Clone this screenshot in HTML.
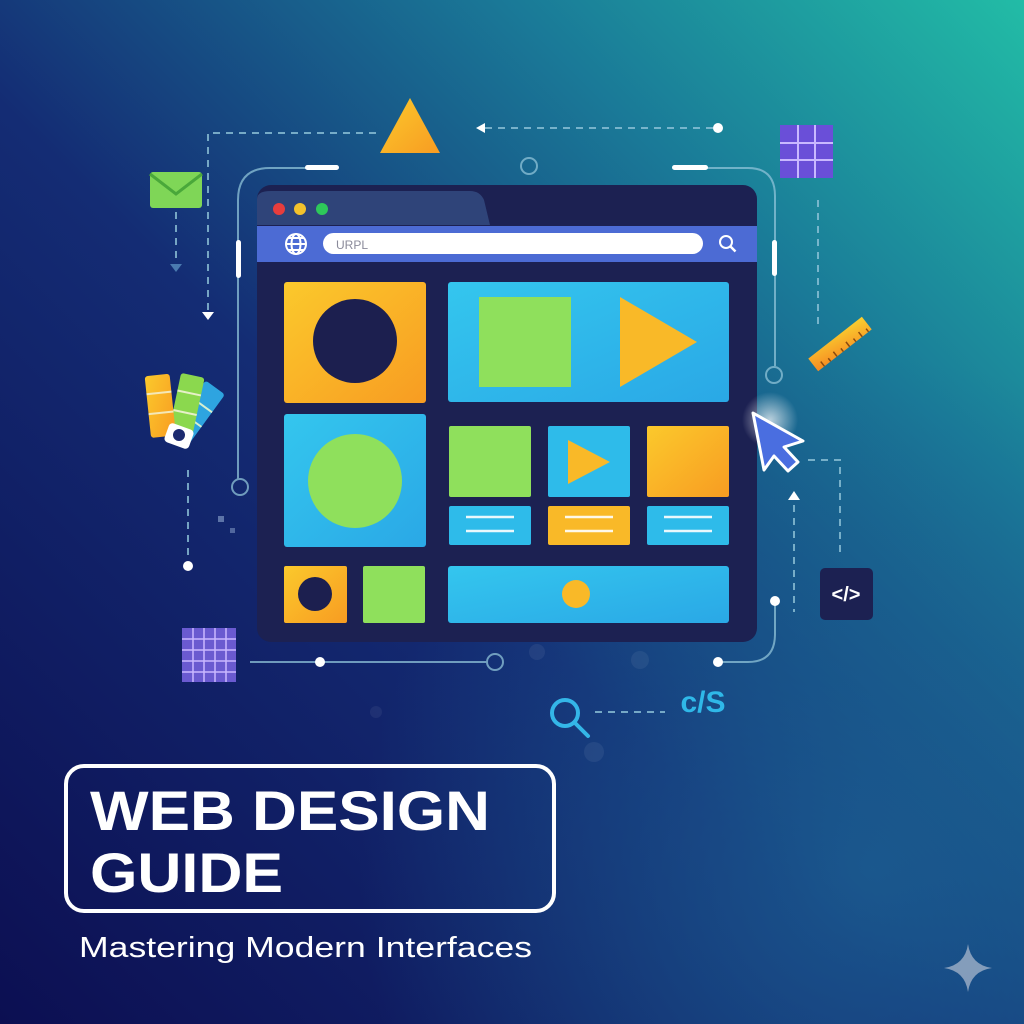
<!DOCTYPE html>
<html><head><meta charset="utf-8"><style>
html,body{margin:0;padding:0;width:1024px;height:1024px;overflow:hidden}
body{background:#12206a}
svg{display:block}
text{font-family:"Liberation Sans",sans-serif}
</style></head><body>
<svg width="1024" height="1024" viewBox="0 0 1024 1024" xmlns="http://www.w3.org/2000/svg">
<defs>
<linearGradient id="bg" x1="0" y1="1" x2="1" y2="0">
<stop offset="0" stop-color="#0c0f52"/>
<stop offset="0.45" stop-color="#142c74"/>
<stop offset="0.75" stop-color="#1a7a98"/>
<stop offset="1" stop-color="#22bca6"/>
</linearGradient>
<radialGradient id="br" cx="0.85" cy="0.85" r="0.5">
<stop offset="0" stop-color="#1b5f92" stop-opacity="0.8"/>
<stop offset="1" stop-color="#1b5f92" stop-opacity="0"/>
</radialGradient>
<linearGradient id="org" x1="0" y1="0" x2="1" y2="1"><stop offset="0" stop-color="#fbc92c"/><stop offset="1" stop-color="#f89c22"/></linearGradient>
<linearGradient id="blu" x1="0" y1="0" x2="1" y2="1"><stop offset="0" stop-color="#34c6ee"/><stop offset="1" stop-color="#2aa8e6"/></linearGradient>
<linearGradient id="rul" x1="0" y1="1" x2="1" y2="0"><stop offset="0" stop-color="#f78a22"/><stop offset="1" stop-color="#f9d030"/></linearGradient>
<radialGradient id="glow"><stop offset="0" stop-color="#ffffff" stop-opacity="0.7"/><stop offset="1" stop-color="#ffffff" stop-opacity="0"/></radialGradient>
</defs>
<rect width="1024" height="1024" fill="url(#bg)"/>
<rect width="1024" height="1024" fill="url(#br)"/>

<g stroke="#8fc3d8" stroke-width="2" fill="none" opacity="0.75">
<path d="M238 480 V200 Q238 168 270 168 H330"/>
<path d="M680 168 H748 Q775 168 775 196 V366"/>
<path d="M250 662 H488"/><path d="M720 662 H748 Q775 662 775 634 V600"/>
<circle cx="529" cy="166" r="8"/><circle cx="774" cy="375" r="8"/><circle cx="240" cy="487" r="8"/><circle cx="495" cy="662" r="8"/>
</g>
<g stroke="#8fc3d8" stroke-width="2" fill="none" stroke-dasharray="7 6" opacity="0.8">
<path d="M208 310 V133 H380"/><path d="M485 128 H715"/>
<path d="M176 212 V262"/><path d="M188 470 V560"/>
<path d="M818 200 V330"/><path d="M808 460 H840 V552"/><path d="M794 505 V612"/>
<path d="M595 712 H665"/>
</g>
<g fill="#ffffff">
<rect x="305" y="165" width="34" height="5" rx="2.5"/><rect x="672" y="165" width="36" height="5" rx="2.5"/>
<rect x="236" y="240" width="5" height="38" rx="2.5"/><rect x="772" y="240" width="5" height="36" rx="2.5"/>
<circle cx="718" cy="128" r="5"/><circle cx="188" cy="566" r="5"/><circle cx="320" cy="662" r="5"/><circle cx="718" cy="662" r="5"/><circle cx="775" cy="601" r="5"/>
<path d="M476 128 l9 -5 v10z"/><path d="M202 312 h12 l-6 8z"/><path d="M788 500 l6 -9 l6 9z"/>
</g>
<path d="M170 264 h12 l-6 8z" fill="#4a7ab0"/>
<rect x="218" y="516" width="6" height="6" fill="#8fa8d0" opacity="0.6"/><rect x="230" y="528" width="5" height="5" fill="#8fa8d0" opacity="0.5"/>

<path d="M410 98 L440 153 L380 153Z" fill="url(#org)"/>
<rect x="150" y="172" width="52" height="36" rx="3" fill="#7fd657"/>
<path d="M150 174 L176 194 L202 174" fill="none" stroke="#4aa83a" stroke-width="3"/>
<g>
<rect x="780" y="125" width="53" height="53" fill="#6a4fd8"/>
<path d="M798 125V178M815 125V178M780 143H833M780 160H833" stroke="#c9b8ff" stroke-width="2"/>
<rect x="182" y="628" width="54" height="54" fill="#6a5ad0"/>
<path d="M193 628V682M204 628V682M215 628V682M226 628V682M182 639H236M182 650H236M182 661H236M182 672H236" stroke="#c9b8ff" stroke-width="1.5"/>
</g>
<g transform="translate(840 344) rotate(-38)">
<rect x="-34" y="-8" width="68" height="16" fill="url(#rul)"/>
<path d="M-26 8v-6M-18 8v-4M-10 8v-6M-2 8v-4M6 8v-6M14 8v-4M22 8v-6M30 8v-4" stroke="#8a4a10" stroke-width="1.5"/>
</g>
<!-- swatches -->
<g>
<g transform="rotate(36 180 436)"><rect x="168" y="376" width="24" height="62" rx="3" fill="#2ea4e0"/><path d="M168 398h24M168 416h24" stroke="#d8efd0" stroke-width="2"/></g>
<g transform="rotate(12 180 436)"><rect x="168" y="374" width="24" height="62" rx="3" fill="#8bd84e"/><path d="M168 392h24M168 412h24" stroke="#e6f0c8" stroke-width="2"/></g>
<g transform="rotate(-6 170 436)"><rect x="151" y="374" width="25" height="62" rx="3" fill="url(#org)"/><path d="M151 392h25M151 412h25" stroke="#f4e8b8" stroke-width="2"/></g>
<rect x="166" y="426" width="26" height="20" rx="4" fill="#ffffff" transform="rotate(20 179 436)"/>
<circle cx="179" cy="435" r="6" fill="#1c2a70"/>
</g>

<rect x="257" y="185" width="500" height="457" rx="14" fill="#1c2152"/>
<path d="M257 225 V199 Q257 191 271 191 H470 Q480 191 484 200 L490 225Z" fill="#2f4479"/>
<circle cx="279" cy="209" r="6" fill="#e83d3d"/><circle cx="300" cy="209" r="6" fill="#f4c22c"/><circle cx="322" cy="209" r="6" fill="#2ec85a"/>
<rect x="257" y="226" width="500" height="36" fill="#4c6bd4"/>
<rect x="323" y="233" width="380" height="21" rx="10.5" fill="#ffffff"/>
<text x="336" y="249" font-size="12" fill="#8a8a9a">URPL</text>
<g stroke="#ffffff" stroke-width="2" fill="none"><circle cx="296" cy="244" r="10"/><ellipse cx="296" cy="244" rx="4.5" ry="10"/><path d="M286 244h20M288 238h16M288 250h16"/>
<circle cx="726" cy="242" r="6"/><path d="M730.5 246.5l5 5" stroke-width="2.5"/></g>

<rect x="284" y="282" width="142" height="121" rx="3" fill="url(#org)"/>
<circle cx="355" cy="341" r="42" fill="#1c1f4f"/>
<rect x="448" y="282" width="281" height="120" rx="3" fill="url(#blu)"/>
<rect x="479" y="297" width="92" height="90" fill="#8fe05c"/>
<path d="M620 297 L697 342 L620 387Z" fill="#f9b928"/>
<rect x="284" y="414" width="142" height="133" rx="3" fill="url(#blu)"/>
<circle cx="355" cy="481" r="47" fill="#8fe05c"/>
<rect x="449" y="426" width="82" height="71" rx="2" fill="#8fe05c"/>
<rect x="548" y="426" width="82" height="71" rx="2" fill="#2ebbea"/>
<path d="M568 440 L610 462 L568 484Z" fill="#f9b928"/>
<rect x="647" y="426" width="82" height="71" rx="2" fill="url(#org)"/>
<rect x="449" y="506" width="82" height="39" rx="2" fill="#2ebbea"/>
<rect x="548" y="506" width="82" height="39" rx="2" fill="#f9b928"/>
<rect x="647" y="506" width="82" height="39" rx="2" fill="#2ebbea"/>
<g stroke="#ffffff" stroke-width="2.5" opacity="0.9"><path d="M466 517h48M466 531h48M565 517h48M565 531h48M664 517h48M664 531h48"/></g>
<rect x="284" y="566" width="63" height="57" rx="2" fill="url(#org)"/>
<circle cx="315" cy="594" r="17" fill="#1c1f4f"/>
<rect x="363" y="566" width="62" height="57" rx="2" fill="#8fe05c"/>
<rect x="448" y="566" width="281" height="57" rx="3" fill="url(#blu)"/>
<circle cx="576" cy="594" r="14" fill="#f9b928"/>

<circle cx="770" cy="420" r="28" fill="url(#glow)"/>
<path d="M753 413 L803 441 L784 447 L798 462 L788 471 L774 456 L764 470Z" fill="#4a6ee0" stroke="#ffffff" stroke-width="3" stroke-linejoin="round"/>
<rect x="820" y="568" width="53" height="52" rx="5" fill="#1c2152"/>
<text x="846" y="601" font-size="20" font-weight="bold" fill="#ffffff" text-anchor="middle">&lt;/&gt;</text>
<g stroke="#34b6e8" stroke-width="4" fill="none"><circle cx="565" cy="713" r="13"/><path d="M575 723l13 13" stroke-linecap="round"/></g>
<text x="703" y="712" font-size="30" font-weight="bold" fill="#2fb8e8" text-anchor="middle">c/S</text>

<g fill="#ffffff" opacity="0.06"><circle cx="640" cy="660" r="9"/><circle cx="537" cy="652" r="8"/><circle cx="594" cy="752" r="10"/><circle cx="376" cy="712" r="6"/></g>

<rect x="66" y="766" width="488" height="145" rx="18" fill="none" stroke="#ffffff" stroke-width="4"/>
<text x="90" y="830" font-size="56" font-weight="bold" fill="#ffffff" textLength="400" lengthAdjust="spacingAndGlyphs">WEB DESIGN</text>
<text x="90" y="892" font-size="56" font-weight="bold" fill="#ffffff" textLength="193" lengthAdjust="spacingAndGlyphs">GUIDE</text>
<text x="79" y="957" font-size="29" fill="#ffffff" textLength="453" lengthAdjust="spacingAndGlyphs">Mastering Modern Interfaces</text>
<path d="M968 944 Q971 965 992 968 Q971 971 968 992 Q965 971 944 968 Q965 965 968 944Z" fill="#9fb0c8" opacity="0.8"/>
</svg>
</body></html>
